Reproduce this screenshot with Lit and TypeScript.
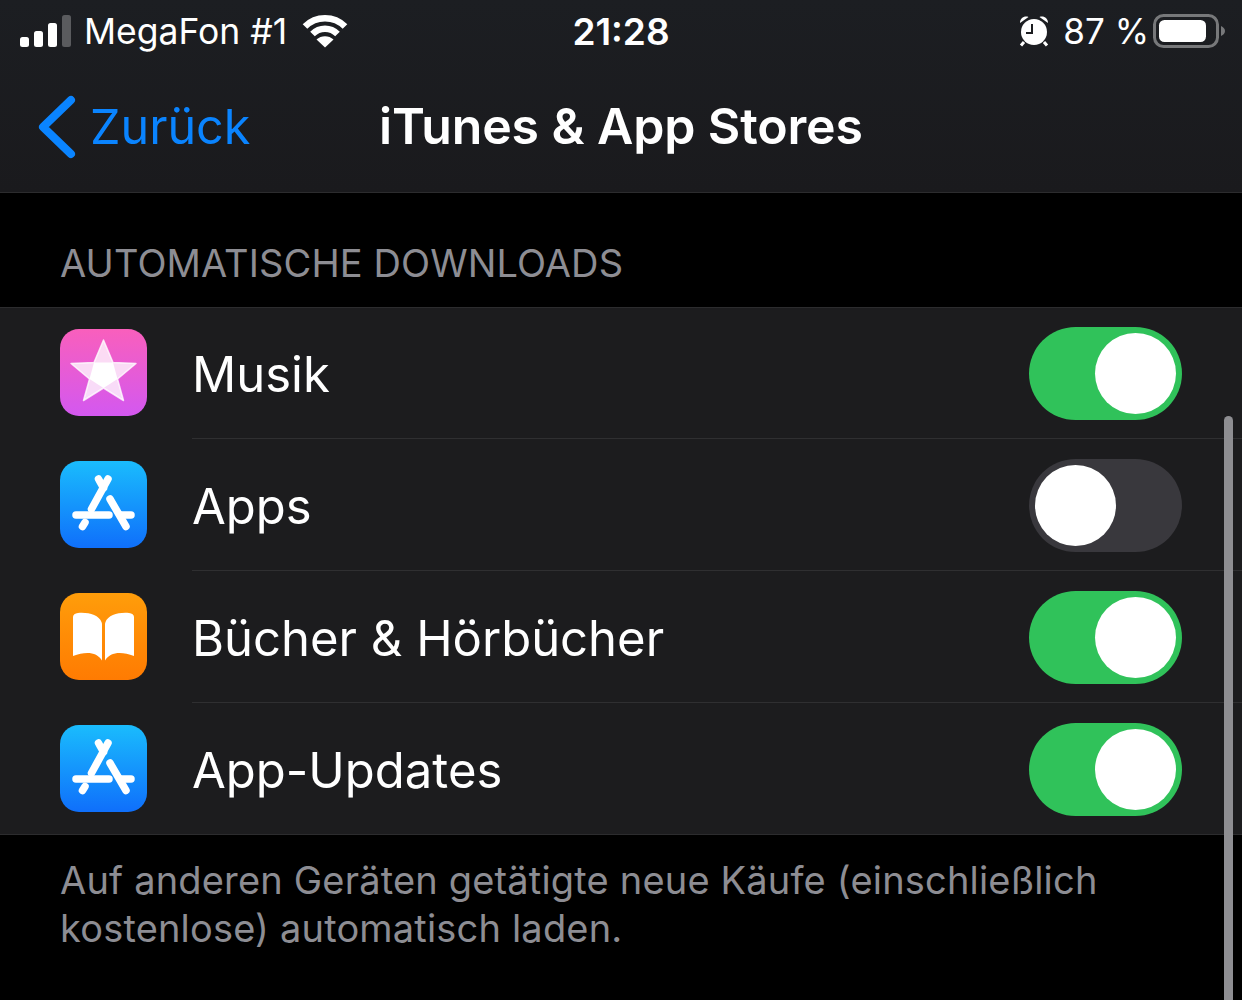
import { LitElement, html, css, svg } from "lit";
import { customElement } from "lit/decorators.js";

const storeGlyph = svg`<g fill="none" stroke="#fff" stroke-linecap="round" stroke-width="7.500">
  <path d="M48 18 L31.500 48"/>
  <path d="M38.500 18 L43.500 27"/>
  <path d="M50 38 L66 65.500"/>
  <path d="M16 54 H49"/>
  <path d="M61 54 H71"/>
  <path d="M22.500 65.500 L25 61.500"/>
</g>`;

const gradStore = (id: string) => svg`<defs><linearGradient id=${id} x1="0" y1="0" x2="0" y2="1"><stop offset="0" stop-color="#1abcfd"/><stop offset="1" stop-color="#0f6ffb"/></linearGradient></defs><rect width="87" height="87" rx="19" fill="url(#${id})"/>${storeGlyph}`;

const icons = {
  star: html`<svg class="app" viewBox="0 0 87 87">
    <defs><linearGradient id="gs" x1="0" y1="0" x2="0" y2="1"><stop offset="0" stop-color="#f95fbc"/><stop offset="1" stop-color="#d358f0"/></linearGradient></defs>
    <rect width="87" height="87" rx="19" fill="url(#gs)"/>
    <path d="M43.500 11 L53 33.500 L76 34.500 L57.500 50 L63.500 71.500 L43.500 59 L23.500 71.500 L29.500 50 L11 34.500 L34 33.500 Z" fill="#fff" fill-opacity=".78" stroke="#fff" stroke-opacity=".78" stroke-width="1.500" stroke-linejoin="round"/>
    <path d="M34 33.500 L53 33.500 L57.500 50 L43.500 59 L29.500 50 Z" fill="#fff"/>
  </svg>`,
  apps: html`<svg class="app" viewBox="0 0 87 87">${gradStore("ga")}</svg>`,
  updates: html`<svg class="app" viewBox="0 0 87 87">${gradStore("gu")}</svg>`,
  books: html`<svg class="app" viewBox="0 0 87 87">
    <defs><linearGradient id="gb" x1="0" y1="0" x2="0" y2="1"><stop offset="0" stop-color="#ff9d0a"/><stop offset="1" stop-color="#ff7b02"/></linearGradient></defs>
    <rect width="87" height="87" rx="19" fill="url(#gb)"/>
    <path d="M13 24 C13 21.500 15 20.500 18 20 C28 19 39 22 41.500 29 C42 30 42 31 42 32 V67.500 C37 59 26 58 13 63 Z" fill="#fff"/>
    <path d="M74 24 C74 21.500 72 20.500 69 20 C59 19 48 22 45.500 29 C45 30 45 31 45 32 V67.500 C50 59 61 58 74 63 Z" fill="#fff"/>
  </svg>`,
};

const rows = [
  { icon: icons.star, label: "Musik", on: true },
  { icon: icons.apps, label: "Apps", on: false },
  { icon: icons.books, label: "Bücher & Hörbücher", on: true },
  { icon: icons.updates, label: "App-Updates", on: true },
];

@customElement("app-root")
export class AppRoot extends LitElement {
  static styles = css`
    :host {
      display: block;
      position: relative;
      width: 1242px;
      height: 1000px;
      overflow: hidden;
      background: #000;
      color: #fff;
      font-family: Inter, "Liberation Sans", sans-serif;
    }
    .top {
      height: 192px;
      background: linear-gradient(#1c1e22, #1a1a1d);
      border-bottom: 1px solid #2c2c2e;
    }
    .status {
      height: 62px;
      display: grid;
      grid-template-columns: 1fr auto 1fr;
      align-items: center;
      font-size: 35.500px;
    }
    .status-left {
      display: flex;
      align-items: center;
      padding-left: 20px;
    }
    .carrier { margin-left: 12px; margin-right: 15px; }
    .time { font-weight: 600; font-size: 37px; }
    .status-right {
      display: flex;
      align-items: center;
      justify-content: flex-end;
      padding-right: 17px;
      font-size: 35px;
    }
    .pct { margin-left: 14px; margin-right: 4px; }
    .nav {
      position: relative;
      height: 127px;
      padding-bottom: 3px;
      display: flex;
      align-items: center;
      justify-content: center;
    }
    .title { font-size: 50px; font-weight: 600; letter-spacing: -0.13px; }
    .back {
      position: absolute;
      left: 38px;
      top: 0;
      bottom: 1px;
      display: flex;
      align-items: center;
      color: #0a84ff;
      font-size: 48.500px;
    }
    .back svg { margin-right: 14px; }
    .head {
      height: 114px;
      box-sizing: border-box;
      padding: 49px 0 0 60px;
      font-size: 38px;
      letter-spacing: 0.1px;
      line-height: 42px;
      color: #8d8d93;
    }
    .list {
      background: #1c1c1e;
      border-top: 1px solid #2c2c2e;
    }
    .row {
      height: 132px;
      display: flex;
      align-items: center;
      padding-left: 60px;
    }
    .row:first-child { height: 131px; }
    .app { width: 87px; height: 87px; flex: none; margin-right: 45px; margin-bottom: 1px; }
    .row:first-child .app { margin-bottom: 2px; }
    .body {
      flex: 1;
      height: 100%;
      display: flex;
      align-items: center;
      justify-content: space-between;
      padding-right: 60px;
      box-shadow: inset 0 -1px 0 #2f2f31;
      font-size: 49px;
    }
    .row:last-child .body { box-shadow: none; }
    .label { padding-top: 2px; }
    .switch {
      width: 153px;
      height: 93px;
      border-radius: 47px;
      background: #39383d;
      display: flex;
      align-items: center;
      padding: 6px;
      box-sizing: border-box;
    }
    .switch.on { background: #30c25a; justify-content: flex-end; }
    .knob { width: 81px; height: 81px; border-radius: 50%; background: #fff; }
    .foot {
      position: relative;
      margin-top: -1px;
      border-top: 1px solid #2c2c2e;
      padding: 21px 60px 0;
      font-size: 38px;
      letter-spacing: 0.18px;
      line-height: 48px;
      color: #8d8d93;
    }
    .scroll {
      position: absolute;
      left: 1224px;
      top: 416px;
      width: 9px;
      height: 600px;
      border-radius: 5px;
      background: #8e8e92;
    }
  `;

  render() {
    return html`
      <div class="top">
        <div class="status">
          <div class="status-left">
            <svg width="52" height="32" viewBox="0 0 52 32">
              <rect x="0" y="22" width="9" height="10" rx="2.500" fill="#fff"/>
              <rect x="14" y="16" width="9" height="16" rx="2.500" fill="#fff"/>
              <rect x="28" y="8" width="9" height="24" rx="2.500" fill="#fff"/>
              <rect x="42" y="0" width="9" height="32" rx="2.500" fill="#5a5b5e"/>
            </svg>
            <span class="carrier">MegaFon #1</span>
            <svg width="46" height="34" viewBox="0 0 46 34" fill="none" stroke="#fff" stroke-width="6.500">
              <path d="M3 12.500 C14 1.500 32 1.500 43 12.500"/>
              <path d="M10.500 20 C17.500 13 28.500 13 35.500 20"/>
              <path d="M23 33.500 L14.500 25.500 C19 21 27 21 31.500 25.500 Z" fill="#fff" stroke="none"/>
            </svg>
          </div>
          <div class="time">21:28</div>
          <div class="status-right">
            <svg width="30" height="32" viewBox="0 0 30 32">
              <circle cx="15" cy="17" r="13" fill="#fff"/>
              <path d="M1 8 C1 3.500 5 0.500 9.500 2 Z M29 8 C29 3.500 25 0.500 20.500 2 Z" fill="#fff"/>
              <path d="M5 27 L2 30.500 M25 27 L28 30.500" stroke="#fff" stroke-width="3"/>
              <path d="M13 9 V18 H7" fill="none" stroke="#1c1d20" stroke-width="2"/>
            </svg>
            <span class="pct">87 %</span>
            <svg width="72" height="34" viewBox="0 0 72 34">
              <rect x="1.500" y="1.500" width="63" height="31" rx="9" fill="none" stroke="#77787a" stroke-width="3"/>
              <rect x="6" y="6" width="47" height="22" rx="5.500" fill="#fff"/>
              <path d="M68 12 C70.500 13 72 15 72 17 C72 19 70.500 21 68 22 Z" fill="#77787a"/>
            </svg>
          </div>
        </div>
        <div class="nav">
          <div class="back">
            <svg width="38" height="64" viewBox="0 0 38 64" fill="none" stroke="#0a84ff" stroke-width="8" stroke-linecap="round" stroke-linejoin="round"><path d="M33 5 L5 32 L33 59"/></svg>
            Zurück
          </div>
          <div class="title">iTunes &amp; App Stores</div>
        </div>
      </div>
      <div class="head">AUTOMATISCHE DOWNLOADS</div>
      <div class="list">
        ${rows.map(
          (r) => html`<div class="row">
            ${r.icon}
            <div class="body">
              <span class="label">${r.label}</span>
              <div class="switch ${r.on ? "on" : ""}"><div class="knob"></div></div>
            </div>
          </div>`
        )}
      </div>
      <div class="foot">Auf anderen Geräten getätigte neue Käufe (einschließlich<br />kostenlose) automatisch laden.</div>
      <div class="scroll"></div>
    `;
  }
}
